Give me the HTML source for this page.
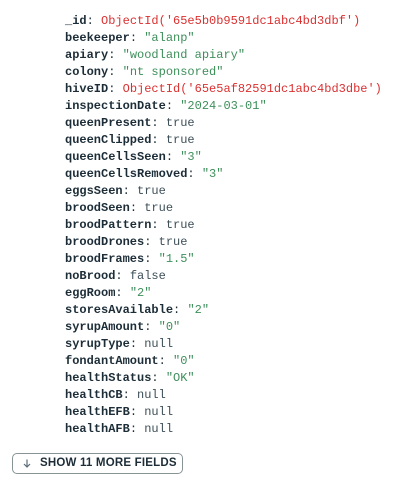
<!DOCTYPE html>
<html><head><style>
body{margin:0;background:#fff;width:416px;height:480px;overflow:hidden}
.l{position:absolute;left:65px;font:12px/17px "Liberation Mono",monospace;color:#1c2d38;white-space:pre}
.k{font-weight:bold;color:#1c2d38}
.o{color:#db3030}
.s{color:#3d8f5a}
.n{color:#3d4f58}
.btn{position:absolute;left:12px;top:453px;width:171px;height:21px;border:1px solid #889397;border-radius:5px;box-sizing:border-box;font:bold 11.5px/19px "Liberation Sans",sans-serif;color:#1c2d38;letter-spacing:.2px}
.btn span{position:absolute;left:27px;top:0}
.btn svg{position:absolute;left:10px;top:5px}
</style></head><body>
<div class="l" style="top:13px"><span class="k">_id</span>: <span class="o">ObjectId('65e5b0b9591dc1abc4bd3dbf')</span>
<span class="k">beekeeper</span>: <span class="s">"alanp"</span>
<span class="k">apiary</span>: <span class="s">"woodland apiary"</span>
<span class="k">colony</span>: <span class="s">"nt sponsored"</span>
<span class="k">hiveID</span>: <span class="o">ObjectId('65e5af82591dc1abc4bd3dbe')</span>
<span class="k">inspectionDate</span>: <span class="s">"2024-03-01"</span>
<span class="k">queenPresent</span>: <span class="n">true</span>
<span class="k">queenClipped</span>: <span class="n">true</span>
<span class="k">queenCellsSeen</span>: <span class="s">"3"</span>
<span class="k">queenCellsRemoved</span>: <span class="s">"3"</span>
<span class="k">eggsSeen</span>: <span class="n">true</span>
<span class="k">broodSeen</span>: <span class="n">true</span>
<span class="k">broodPattern</span>: <span class="n">true</span>
<span class="k">broodDrones</span>: <span class="n">true</span>
<span class="k">broodFrames</span>: <span class="s">"1.5"</span>
<span class="k">noBrood</span>: <span class="n">false</span>
<span class="k">eggRoom</span>: <span class="s">"2"</span>
<span class="k">storesAvailable</span>: <span class="s">"2"</span>
<span class="k">syrupAmount</span>: <span class="s">"0"</span>
<span class="k">syrupType</span>: <span class="n">null</span>
<span class="k">fondantAmount</span>: <span class="s">"0"</span>
<span class="k">healthStatus</span>: <span class="s">"OK"</span>
<span class="k">healthCB</span>: <span class="n">null</span>
<span class="k">healthEFB</span>: <span class="n">null</span>
<span class="k">healthAFB</span>: <span class="n">null</span></div>
<div class="btn"><svg width="8" height="9" viewBox="0 0 8 9"><path d="M4 0.5V8M1 5l3 3 3-3" fill="none" stroke="#5c6c75" stroke-width="1.2"/></svg><span>SHOW 11 MORE FIELDS</span></div>
</body></html>
